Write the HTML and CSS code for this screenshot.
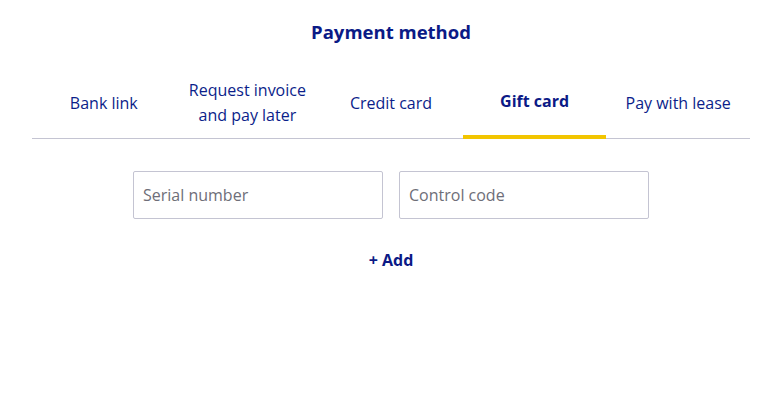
FILE: index.html
```html
<!DOCTYPE html>
<html lang="en">
<head>
<meta charset="utf-8">
<title>Payment method</title>
<link rel="stylesheet" href="styles.css">
</head>
<body>
<main class="page">
  <h1 class="title">Payment method</h1>
  <nav class="tabs">
    <div class="tab">Bank link</div>
    <div class="tab">Request invoice<br>and pay later</div>
    <div class="tab">Credit card</div>
    <div class="tab active">Gift card</div>
    <div class="tab">Pay with lease</div>
  </nav>
  <section class="panel">
    <div class="fields">
      <input class="field" type="text" placeholder="Serial number">
      <input class="field" type="text" placeholder="Control code">
    </div>
    <button class="add" type="button">+ Add</button>
  </section>
</main>
</body>
</html>
```
FILE: styles.css
```css
html, body {
  margin: 0;
  padding: 0;
  background: #ffffff;
}
body {
  font-family: "Open Sans", "Liberation Sans", sans-serif;
  color: #0b1e8a;
}
.page {
  width: 718px;
  margin-left: 32px;
  padding-top: 20px;
}
.title {
  margin: 0;
  text-align: center;
  font-size: 18.5px;
  font-weight: 700;
  line-height: 24px;
  color: #0b1a86;
}
.tabs {
  display: grid;
  grid-template-columns: repeat(5, 1fr);
  margin-top: 34px;
  border-bottom: 1px solid #c4c4d2;
}
.tab {
  display: flex;
  align-items: center;
  justify-content: center;
  text-align: center;
  height: 60px;
  box-sizing: border-box;
  font-size: 16px;
  line-height: 25px;
  color: #0b1e8a;
  padding-bottom: 10px;
}
.tab.active {
  font-weight: 700;
  color: #0b1a86;
  border-bottom: 4px solid #f2c500;
  padding-bottom: 10px;
  margin-bottom: -1px;
  height: 61px;
}
.panel {
  display: flex;
  flex-direction: column;
  align-items: center;
  padding-top: 32px;
}
.fields {
  display: flex;
  gap: 16px;
}
.field {
  width: 250px;
  height: 48px;
  box-sizing: border-box;
  border: 1px solid #c4c4d2;
  border-radius: 2px;
  padding: 0 9px;
  font-family: inherit;
  font-size: 16px;
  color: #333;
  outline: none;
}
.field::placeholder {
  color: #6e6e78;
  opacity: 1;
}
.add {
  margin-top: 30px;
  border: 0;
  background: none;
  padding: 0;
  font-family: inherit;
  font-size: 16px;
  font-weight: 700;
  color: #0b1a86;
  line-height: 22px;
  cursor: pointer;
}
```
